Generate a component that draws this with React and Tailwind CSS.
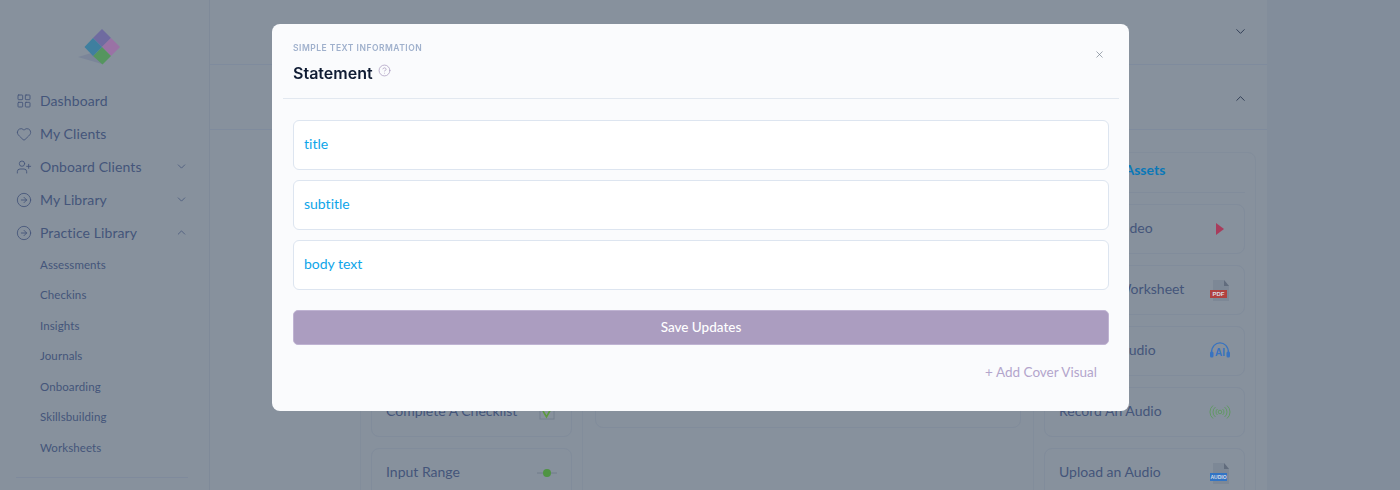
import React from "react";
import {
  ChevronDown,
  ChevronUp,
  CircleArrowRight,
  CircleHelp,
  Heart,
  LayoutGrid,
  UserPlus,
  X,
} from "lucide-react";

function Logo() {
  return (
    <svg width="50" height="44" viewBox="0 0 50 44" className="ml-[77px]">
      <polygon points="1,32 18,27 25,39" fill="#7b8599" />
      <polygon points="25,4 34,13 25,22 16,13" fill="#6f6ba0" />
      <polygon points="34,13 43,22 34,31 25,22" fill="#9a72a5" />
      <polygon points="25,22 34,31 25.5,39.5 16,31" fill="#55955f" />
      <polygon points="16,13 25,22 16,31 7.5,22" fill="#3f7f9f" />
    </svg>
  );
}

function PlayIcon() {
  return (
    <svg width="24" height="24" viewBox="0 0 24 24">
      <polygon points="8,6 8,18 16,12" fill="#a83c5c" />
    </svg>
  );
}

function FileIcon({ label, color }) {
  return (
    <svg width="24" height="24" viewBox="0 0 24 24">
      <path d="M5 2h11l5 6v15H5z" fill="#7d8896" />
      <path d="M16 2l5 6h-5z" fill="#616c7d" />
      <rect x="2" y="12" width="17" height="8" fill={color} />
      <text x="10.5" y="18.2" fontSize={label.length > 3 ? 5 : 6} fontWeight="700" fill="#d9dde3" textAnchor="middle" fontFamily="Liberation Sans, sans-serif">
        {label}
      </text>
    </svg>
  );
}

function AiIcon() {
  return (
    <svg width="24" height="24" viewBox="0 0 24 24" fill="none">
      <path d="M3.500 14C3.500 0.500 20.500 0.500 20.500 14" stroke="#3873c0" strokeWidth="1.300" />
      <rect x="2" y="12.500" width="3.500" height="6" rx="1.500" fill="#3873c0" />
      <rect x="18.500" y="12.500" width="3.500" height="6" rx="1.500" fill="#3873c0" />
      <text x="12" y="16.800" fontSize="10" fontWeight="700" fill="#3873c0" textAnchor="middle" fontFamily="Liberation Sans, sans-serif">
        AI
      </text>
    </svg>
  );
}

function RadioIcon() {
  return (
    <svg width="24" height="24" viewBox="0 0 24 24" fill="none" stroke="#5c9a5e" strokeWidth="0.900">
      <circle cx="12" cy="12" r="1.800" />
      <path d="M9.500 9a3.750 3.750 0 0 0 0 6M14.500 9a3.750 3.750 0 0 1 0 6M7.500 7a6.250 6.250 0 0 0 0 10M16.500 7a6.250 6.250 0 0 1 0 10M5 5.500a8.500 8.500 0 0 0 0 13M19 5.500a8.500 8.500 0 0 1 0 13" />
    </svg>
  );
}

function CheckIcon() {
  return (
    <svg width="24" height="24" viewBox="0 0 24 24" fill="none">
      <rect x="5" y="5" width="14" height="14" stroke="#75808f" strokeWidth="1" />
      <path d="M8 11l3.500 6L17 7" stroke="#5c9a3e" strokeWidth="1.600" />
    </svg>
  );
}

function RangeIcon() {
  return (
    <svg width="24" height="24" viewBox="0 0 24 24">
      <path d="M2 12h20" stroke="#717c8b" strokeWidth="1" />
      <circle cx="12" cy="12" r="4" fill="#4f9443" />
    </svg>
  );
}

const mainNav = [
  { label: "Dashboard", Icon: LayoutGrid },
  { label: "My Clients", Icon: Heart },
  { label: "Onboard Clients", Icon: UserPlus, chevron: "down" },
  { label: "My Library", Icon: CircleArrowRight, chevron: "down" },
  { label: "Practice Library", Icon: CircleArrowRight, chevron: "up" },
];

const subNav = ["Assessments", "Checkins", "Insights", "Journals", "Onboarding", "Skillsbuilding", "Worksheets"];

function Sidebar() {
  return (
    <aside className="w-[210px] shrink-0 border-r border-[#7f8a99] bg-[#87919d] pt-[25px] font-['Lato',sans-serif] text-[#44557a] [font-variant-ligatures:none]">
      <div className="h-[59px]">
        <Logo />
      </div>
      <nav className="px-4">
        {mainNav.map(({ label, Icon, chevron }) => (
          <div key={label} className="flex h-[33px] items-center">
            <Icon size={16} strokeWidth={1.300} className="mr-2 shrink-0" />
            <span className="flex-1 text-[14px] tracking-[0.1px]">{label}</span>
            {chevron === "down" && <ChevronDown size={13} strokeWidth={1.400} className="mr-[5px]" />}
            {chevron === "up" && <ChevronUp size={13} strokeWidth={1.400} className="mr-[5px]" />}
          </div>
        ))}
        <div className="pl-6">
          {subNav.map((label) => (
            <div key={label} className="flex h-[30.5px] items-center text-[11.5px] tracking-[0.1px]">
              {label}
            </div>
          ))}
        </div>
        <div className="mt-[14px] mr-[5px] border-t border-[#7f8a9c]" />
      </nav>
    </aside>
  );
}

function Row({ label, icon }) {
  return (
    <div className="flex h-[50px] items-center justify-between rounded-lg border border-[#818c9b] pl-[14px] pr-3 font-['Lato',sans-serif] text-[14px] text-[#44557a] [font-variant-ligatures:none]">
      <span className="pb-1">{label}</span>
      {icon}
    </div>
  );
}

function Main() {
  return (
    <main className="flex-1 bg-[#828d9b]">
      <div className="h-full w-[1057px] bg-[#87919d]">
        <div className="flex h-[65px] items-center justify-end border-b border-[#7f8b9d] pr-5 text-[#2d3a52]">
          <ChevronDown size={15} strokeWidth={1.500} className="mt-[-2px] mr-[-1px]" />
        </div>
        <div className="flex h-[65px] items-center justify-end border-b border-[#7f8b9d] pr-5 text-[#2d3a52]">
          <ChevronUp size={15} strokeWidth={1.500} className="mt-[2px] mr-[-1px]" />
        </div>
        <div className="flex gap-3 pt-[22px] pl-[150px]">
          <section className="flex w-[223px] shrink-0 flex-col gap-[11px] rounded-lg border border-[#828d9b] px-[10px] pt-[51px]">
            <Row />
            <Row />
            <Row />
            <Row label="Complete A Checklist" icon={<CheckIcon />} />
            <Row label="Input Range" icon={<RangeIcon />} />
          </section>
          <section className="mt-[52px] h-[224px] w-[426px] shrink-0 rounded-lg border border-[#818c9b]" />
          <section className="w-[223px] shrink-0 rounded-lg border border-[#828d9b] px-[10px]">
            <h3 className="h-[39px] pt-[7px] pl-[13px] font-['Lato',sans-serif] text-[14px] leading-[20px] font-bold text-[#0a78b8]">
              Additional Assets
            </h3>
            <div className="flex flex-col gap-[11px] border-t border-[#818c9b] pt-[11px]">
              <Row label="Upload a Video" icon={<PlayIcon />} />
              <Row label="Upload a Worksheet" icon={<FileIcon label="PDF" color="#b1413f" />} />
              <Row label="Create AI Audio" icon={<AiIcon />} />
              <Row label="Record An Audio" icon={<RadioIcon />} />
              <Row label="Upload an Audio" icon={<FileIcon label="AUDIO" color="#3274c4" />} />
            </div>
          </section>
        </div>
      </div>
    </main>
  );
}

function Field({ label }) {
  return (
    <div className="flex h-[50px] items-center rounded-md border border-[#dde5f0] bg-white px-[10px] pb-[3px] text-[14px] text-[#0ea5e9]">
      {label}
    </div>
  );
}

function Modal() {
  return (
    <div className="ml-[272px] mt-6 h-[387px] w-[857px] rounded-lg bg-[#fafbfd] font-['Lato',sans-serif] [font-variant-ligatures:none]">
      <header className="relative mr-[10px] ml-[11px] h-[75px] border-b border-[#e2e8f0] px-[10px] pt-[19px]">
        <p className="font-['Inter',sans-serif] text-[8.5px] leading-[11px] font-semibold tracking-[0.5px] text-[#9fb0cc] uppercase">
          Simple Text Information
        </p>
        <div className="mt-[6px] flex items-center">
          <h2 className="font-['Inter',sans-serif] text-[16px] leading-[26px] font-semibold text-[#0f1b33]">Statement</h2>
          <CircleHelp size={13} strokeWidth={1.400} className="mt-[-5px] ml-[5px] text-[#a99cc0]" />
        </div>
        <X size={11} strokeWidth={1.400} className="absolute top-[25px] right-[14px] text-[#6f7a89]" />
      </header>
      <div className="flex flex-col gap-[10px] pr-5 pl-[21px] pt-[21px]">
        <Field label="title" />
        <Field label="subtitle" />
        <Field label="body text" />
      </div>
      <div className="pr-5 pl-[21px] pt-5">
        <button className="h-[35px] w-full rounded-[5px] border border-[#bfb3d2] bg-[#ab9dc0] text-[13.5px] font-medium text-white">
          Save Updates
        </button>
        <p className="mt-[17px] pr-3 text-right text-[13.5px] leading-5 text-[#b3a5cc]">+ Add Cover Visual</p>
      </div>
    </div>
  );
}

export default function App() {
  return (
    <div className="relative flex h-screen w-full overflow-hidden">
      <Sidebar />
      <Main />
      <div className="absolute inset-0 backdrop-blur-[0.6px]">
        <Modal />
      </div>
    </div>
  );
}
